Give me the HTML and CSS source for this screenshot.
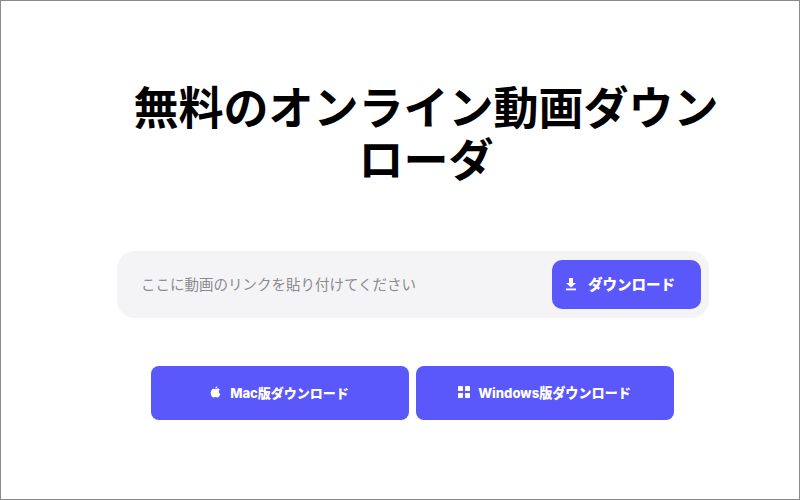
FILE: index.html
```html
<!DOCTYPE html>
<html lang="ja">
<head>
<meta charset="utf-8">
<title>無料のオンライン動画ダウンローダ</title>
<link rel="stylesheet" href="styles.css">
</head>
<body>
<main class="page">
  <h1 class="title">無料のオンライン動画ダウンローダ</h1>
  <form class="search">
    <input class="search-input" type="text" placeholder="ここに動画のリンクを貼り付けてください">
    <button class="btn btn-go" type="button">
      <svg class="icon" width="14" height="14" viewBox="0 0 14 14"><path d="M5 1h4v5h3L7 10.5 2 6h3z"/><rect x="2" y="11.5" width="10" height="1.8"/></svg>
      ダウンロード
    </button>
  </form>
  <div class="apps">
    <a class="btn btn-app" href="#">
      <svg class="icon icon-apple" width="11" height="12" viewBox="0 0 12 14"><path d="M8.2 0.3c.1 1.200-.9 2.600-2.400 2.700C5.600 1.700 6.800.4 8.200.3zM5.900 3.700c.7 0 1.500-.7 2.700-.7 1 0 1.900.5 2.500 1.300-2 1.200-1.700 4 .5 4.900-.6 1.600-1.800 4.300-3.200 4.300-.9 0-1.300-.6-2.300-.6s-1.400.6-2.300.6C1.900 13.500.4 10.400.4 7.900.4 5 2.100 3.100 4 3.100c.8 0 1.400.6 1.900.6z"/></svg>
      Mac版ダウンロード
    </a>
    <a class="btn btn-app btn-win" href="#">
      <svg class="icon" width="12" height="12" viewBox="0 0 12 12"><rect width="5" height="5" rx=".4"/><rect x="7" width="5" height="5" rx=".4"/><rect y="7" width="5" height="5" rx=".4"/><rect x="7" y="7" width="5" height="5" rx=".4"/></svg>
      Windows版ダウンロード
    </a>
  </div>
</main>
</body>
</html>
```

FILE: styles.css
```css
* {
  box-sizing: border-box;
}
html, body {
  height: 100%;
}
body {
  margin: 0;
  border: 1px solid #8a8a8a;
  background: #fff;
  font-family: Inter, "Noto Sans CJK JP", sans-serif;
}
.page {
  display: flex;
  flex-direction: column;
  align-items: center;
  padding: 79px 90px 0 116px;
}
.title {
  width: 600px;
  margin: 0 0 0 26px;
  font-size: 45px;
  font-weight: 700;
  line-height: 52px;
  text-align: center;
  color: #000;
  font-family: "Noto Sans CJK JP", sans-serif;
}
.search {
  display: flex;
  align-items: center;
  justify-content: space-between;
  width: 592px;
  height: 67px;
  margin-top: 67px;
  padding: 0 8px 0 22px;
  border-radius: 18px;
  background: #f4f4f6;
}
.search-input {
  flex: 1;
  min-width: 0;
  height: 30px;
  margin-bottom: 2px;
  border: 0;
  outline: 0;
  background: transparent;
  font-family: "Noto Sans CJK JP", sans-serif;
  font-size: 14.500px;
}
.search-input::placeholder {
  color: #8b8b8f;
  opacity: 1;
}
.btn {
  display: flex;
  align-items: center;
  justify-content: center;
  border: 0;
  padding: 0 0 2px;
  background: #5a57fb;
  color: #fff;
  font-family: Inter, "Noto Sans CJK JP", sans-serif;
  font-weight: 800;
  text-decoration: none;
}
.icon {
  flex: none;
  fill: #fff;
}
.btn-go {
  gap: 10px;
  width: 149px;
  height: 49px;
  padding-right: 14px;
  border-radius: 10px;
  font-size: 14.500px;
}
.apps {
  display: flex;
  gap: 7px;
  margin-top: 48px;
  margin-right: 2px;
}
.btn-app {
  gap: 9px;
  width: 258px;
  height: 54px;
  border-radius: 8px;
  font-size: 13px;
}
.btn-win {
  gap: 8px;
  font-size: 13.100px;
}
```
